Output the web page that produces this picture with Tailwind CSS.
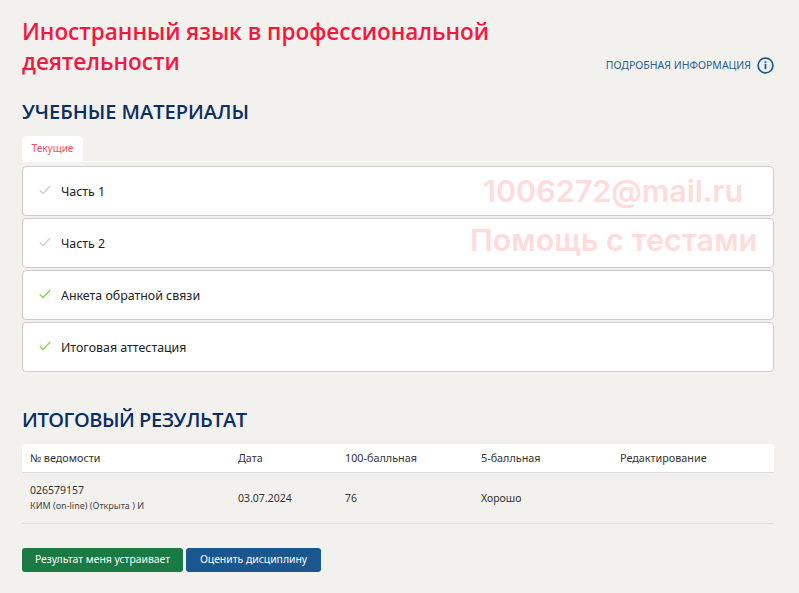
<!DOCTYPE html>
<html lang="ru">
<head>
    <meta charset="UTF-8">
    <meta name="viewport" content="width=device-width, initial-scale=1.0">
    <title>Иностранный язык в профессиональной деятельности</title>
    <script src="https://cdn.jsdelivr.net/npm/@tailwindcss/browser@4"></script>
</head>
<body class="bg-[#f3f1ee] font-['Noto_Sans',sans-serif] text-[#222] h-[593px] overflow-hidden">
    <div class="relative px-[22px] pt-[17px] w-[796px]">
        <!-- заголовок -->
        <div class="flex justify-between items-end">
            <h1 class="w-[520px] text-[22.5px] leading-[30px] font-semibold text-[#f5173f] font-['Open_Sans',sans-serif]">Иностранный язык в профессиональной деятельности</h1>
            <a class="flex items-center gap-[6px] mb-[3px] text-[10.5px] leading-[18px] text-[#2c5f8a]">
                ПОДРОБНАЯ ИНФОРМАЦИЯ
                <svg class="w-[17px] h-[17px]" viewBox="0 0 17 17" fill="none">
                    <circle cx="8.5" cy="8.5" r="7.4" stroke="#1a5a91" stroke-width="1.7"></circle>
                    <rect x="7.6" y="7" width="1.8" height="5.2" fill="#1a5a91"></rect>
                    <rect x="7.6" y="4.3" width="1.8" height="1.8" fill="#1a5a91"></rect>
                </svg>
            </a>
        </div>

        <h2 class="mt-[21px] text-[20px] leading-[28px] font-semibold text-[#0b2e63] font-['Open_Sans',sans-serif]">УЧЕБНЫЕ МАТЕРИАЛЫ</h2>

        <!-- вкладки -->
        <div class="mt-[10px] border-b border-white h-[26px]">
            <div class="w-[61px] h-[25px] bg-white rounded-t-[5px] rounded-b-[3px] flex items-center justify-center text-[10px] text-[#f0505f]">Текущие</div>
        </div>

        <!-- материалы -->
        <div class="mt-[4px] flex flex-col gap-[2px] text-[12.4px]">
            <div class="h-[50px] bg-white border border-[#cccccc] rounded-[4px] flex items-center pl-[16px] gap-[10px]">
                <svg class="w-[12px] h-[10px] mt-[-3px]" viewBox="0 0 12 10" fill="none"><path d="M0.8 5.4 L4 8.6 L11.2 1" stroke="#cfcfcb" stroke-width="1.4"></path></svg>
                <span class="mt-[2px]">Часть 1</span>
            </div>
            <div class="h-[50px] bg-white border border-[#cccccc] rounded-[4px] flex items-center pl-[16px] gap-[10px]">
                <svg class="w-[12px] h-[10px] mt-[-3px]" viewBox="0 0 12 10" fill="none"><path d="M0.8 5.4 L4 8.6 L11.2 1" stroke="#cfcfcb" stroke-width="1.4"></path></svg>
                <span class="mt-[2px]">Часть 2</span>
            </div>
            <div class="h-[50px] bg-white border border-[#cccccc] rounded-[4px] flex items-center pl-[16px] gap-[10px]">
                <svg class="w-[12px] h-[10px] mt-[-3px]" viewBox="0 0 12 10" fill="none"><path d="M0.8 5.4 L4 8.6 L11.2 1" stroke="#93cf4f" stroke-width="1.4"></path></svg>
                <span class="mt-[2px]">Анкета обратной связи</span>
            </div>
            <div class="h-[50px] bg-white border border-[#cccccc] rounded-[4px] flex items-center pl-[16px] gap-[10px]">
                <svg class="w-[12px] h-[10px] mt-[-3px]" viewBox="0 0 12 10" fill="none"><path d="M0.8 5.4 L4 8.6 L11.2 1" stroke="#93cf4f" stroke-width="1.4"></path></svg>
                <span class="mt-[2px]">Итоговая аттестация</span>
            </div>
        </div>

        <h2 class="mt-[34px] text-[20px] leading-[28px] font-semibold tracking-[-0.45px] text-[#0b2e63] font-['Open_Sans',sans-serif]">ИТОГОВЫЙ РЕЗУЛЬТАТ</h2>

        <!-- результат -->
        <div class="mt-[10px] text-[10.8px] text-[#333]">
            <div class="grid grid-cols-[208px_107px_136px_139px_1fr] h-[29px] items-center bg-white border-b border-[#dddddd] rounded-t-[3px] pl-[8px]">
                <div>№ ведомости</div>
                <div>Дата</div>
                <div>100-балльная</div>
                <div>5-балльная</div>
                <div>Редактирование</div>
            </div>
            <div class="grid grid-cols-[208px_107px_136px_139px_1fr] h-[51px] items-center border-b border-[#dddddd] pl-[8px] text-[10.5px]">
                <div>
                    <div class="leading-[16px]">026579157</div>
                    <div class="text-[9px] leading-[16px] text-[#444]">КИМ (on-line) (Открыта ) И</div>
                </div>
                <div class="mt-[1px]">03.07.2024</div>
                <div class="mt-[1px]">76</div>
                <div class="mt-[1px]">Хорошо</div>
                <div></div>
            </div>
        </div>

        <div class="mt-[24px] flex gap-[3px] text-[10.4px] text-white">
            <button class="w-[161px] h-[24px] bg-[#1b7a43] rounded-[3px]">Результат меня устраивает</button>
            <button class="w-[135px] h-[24px] bg-[#19578e] rounded-[3px]">Оценить дисциплину</button>
        </div>

        <!-- водяной знак поверх карточек -->
        <div class="absolute left-[483px] top-[171px] text-[30.5px] leading-[40px] font-semibold text-[#ffdcdc] font-['Inter',sans-serif] whitespace-nowrap">1006272@mail.ru</div>
        <div class="absolute left-[470px] top-[220px] text-[30.5px] leading-[40px] font-semibold text-[#ffdcdc] font-['Inter',sans-serif] whitespace-nowrap">Помощь с тестами</div>
    </div>
</body>
</html>
